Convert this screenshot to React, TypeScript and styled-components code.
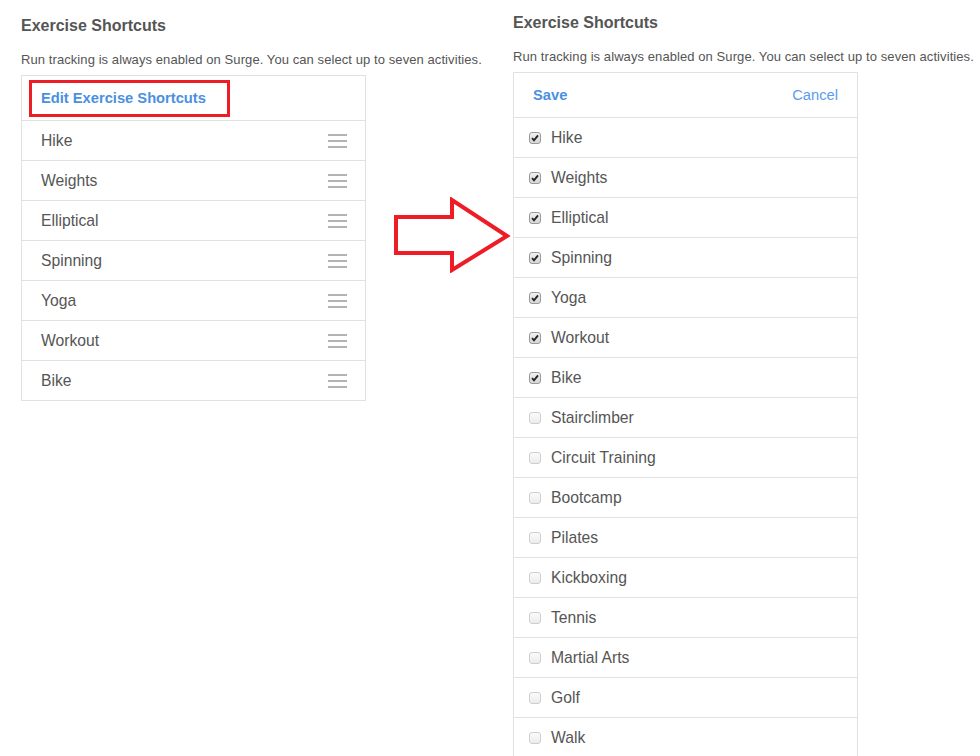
import React from 'react';
import styled, { createGlobalStyle } from 'styled-components';

const GlobalStyle = createGlobalStyle`
  html, body {
    margin: 0;
    padding: 0;
    background: #fff;
  }
  body {
    font-family: 'Liberation Sans', Arial, Helvetica, sans-serif;
    color: #555;
  }
`;

const Page = styled.div`
  display: flex;
  align-items: flex-start;
  width: 980px;
  height: 756px;
  overflow: hidden;
  padding-left: 21px;
  box-sizing: border-box;
`;

const Section = styled.div<{ $top: number; $width?: number }>`
  display: flex;
  flex-direction: column;
  padding-top: ${props => props.$top}px;
  width: ${props => (props.$width ? `${props.$width}px` : 'auto')};
  flex-shrink: 0;
`;

const Title = styled.div`
  font-size: 16px;
  font-weight: bold;
  color: #555;
  line-height: 18px;
  height: 18px;
`;

const Description = styled.div`
  margin-top: 17px;
  font-size: 13px;
  letter-spacing: 0.08px;
  line-height: 15px;
  color: #555;
  white-space: nowrap;
`;

const Columns = styled.div`
  display: flex;
  align-items: flex-start;
  margin-top: 8px;
`;

const Panel = styled.div`
  width: 345px;
  border: 1px solid #e1e1e1;
  border-bottom: none;
  box-sizing: border-box;
  background: #fff;
`;

const HeaderRow = styled.div`
  display: flex;
  align-items: center;
  justify-content: space-between;
  height: 45px;
  padding: 0 19px;
  border-bottom: 1px solid #e1e1e1;
  box-sizing: border-box;
`;

const EditLink = styled.span`
  display: inline-flex;
  align-items: center;
  height: 37px;
  margin-left: -12px;
  padding: 0 21px 0 9px;
  border: 3px solid #ee1c25;
  box-sizing: border-box;
  font-size: 14.7px;
  font-weight: bold;
  color: #4a90e2;
`;

const HeaderLink = styled.span<{ $bold?: boolean }>`
  font-size: 14.7px;
  font-weight: ${props => (props.$bold ? 'bold' : 'normal')};
  color: ${props => (props.$bold ? '#4a90e2' : '#5b9cec')};
`;

const Row = styled.div`
  display: flex;
  align-items: center;
  height: 40px;
  padding: 0 18px 0 19px;
  border-bottom: 1px solid #e1e1e1;
  box-sizing: border-box;
  font-size: 15.7px;
  color: #555;
`;

const CheckRow = styled(Row)`
  padding-left: 15px;
`;

const Label = styled.span`
  flex: 1;
`;

const Handle = styled.span`
  display: flex;
  flex-direction: column;
  gap: 4px;
  width: 19px;
`;

const HandleLine = styled.span`
  display: block;
  height: 2px;
  background: #b3b3b3;
`;

const Box = styled.span<{ $checked: boolean }>`
  display: inline-flex;
  align-items: center;
  justify-content: center;
  width: 12px;
  height: 12px;
  margin-right: 10px;
  border: 1px solid ${props => (props.$checked ? '#9a9a9a' : '#cfcfcf')};
  border-radius: 3px;
  box-sizing: border-box;
  background: ${props => (props.$checked ? 'linear-gradient(#f0f0f0, #d6d6d6)' : 'linear-gradient(#fbfbfb, #ececec)')};
`;

const ArrowWrap = styled.div`
  margin-left: 27px;
  margin-top: 122px;
  line-height: 0;
`;

const shortcuts = ['Hike', 'Weights', 'Elliptical', 'Spinning', 'Yoga', 'Workout', 'Bike'];

const activities = [
  'Hike',
  'Weights',
  'Elliptical',
  'Spinning',
  'Yoga',
  'Workout',
  'Bike',
  'Stairclimber',
  'Circuit Training',
  'Bootcamp',
  'Pilates',
  'Kickboxing',
  'Tennis',
  'Martial Arts',
  'Golf',
  'Walk',
];

const Arrow = () => (
  <svg width="118" height="76" viewBox="0 0 118 76">
    <path
      d="M3 20 H59 V3 L114 39 L59 73 V56 H3 Z"
      fill="#fff"
      stroke="#ee1c25"
      strokeWidth="4"
      strokeLinejoin="miter"
    />
  </svg>
);

const Check = () => (
  <svg width="8" height="8" viewBox="0 0 8 8">
    <path d="M1 4.2 L3 6.4 L7 1.4" fill="none" stroke="#222" strokeWidth="1.8" />
  </svg>
);

const App = () => {
  return (
    <>
      <GlobalStyle />
      <Page>
        <Section $top={17} $width={492}>
          <Title>Exercise Shortcuts</Title>
          <Description>Run tracking is always enabled on Surge. You can select up to seven activities.</Description>
          <Columns>
            <Panel>
              <HeaderRow>
                <EditLink>Edit Exercise Shortcuts</EditLink>
              </HeaderRow>
              {shortcuts.map(name => (
                <Row key={name}>
                  <Label>{name}</Label>
                  <Handle>
                    <HandleLine />
                    <HandleLine />
                    <HandleLine />
                  </Handle>
                </Row>
              ))}
            </Panel>
            <ArrowWrap>
              <Arrow />
            </ArrowWrap>
          </Columns>
        </Section>
        <Section $top={14}>
          <Title>Exercise Shortcuts</Title>
          <Description>Run tracking is always enabled on Surge. You can select up to seven activities.</Description>
          <Columns>
            <Panel>
              <HeaderRow>
                <HeaderLink $bold>Save</HeaderLink>
                <HeaderLink>Cancel</HeaderLink>
              </HeaderRow>
              {activities.map((name, i) => (
                <CheckRow key={name}>
                  <Box $checked={i < 7}>{i < 7 && <Check />}</Box>
                  <Label>{name}</Label>
                </CheckRow>
              ))}
            </Panel>
          </Columns>
        </Section>
      </Page>
    </>
  );
};

export default App;
